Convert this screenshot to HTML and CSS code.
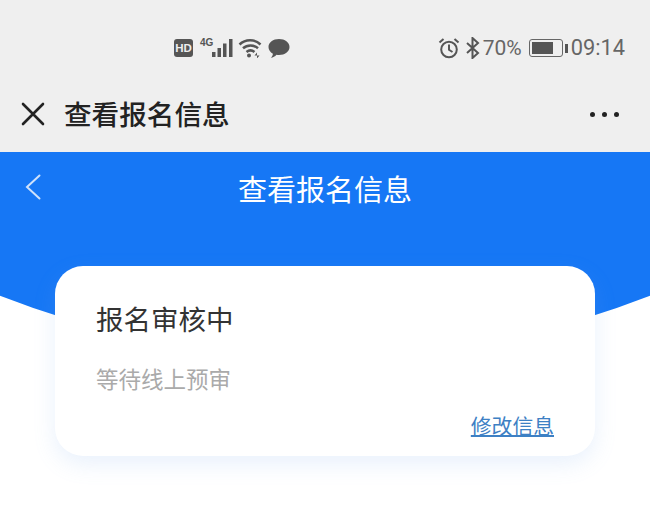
FILE: index.html
```html
<!DOCTYPE html>
<html lang="zh-CN">
<head>
<meta charset="utf-8">
<title>查看报名信息</title>
<link rel="stylesheet" href="styles.css">
</head>
<body>
<div class="status">
  <div class="status-left">
    <span class="hd">HD</span>
    <span class="net"><span class="net-label">4G</span>
      <svg class="signal" width="21" height="20" viewBox="0 0 21 20"><rect x="0" y="14" width="3.500" height="5" /><rect x="5.500" y="10" width="3.500" height="9"/><rect x="11" y="5.500" width="3.500" height="13.500"/><rect x="17" y="1" width="3.500" height="18"/></svg>
    </span>
    <svg class="wifi" width="25" height="20" viewBox="0 0 25 20" fill="none" stroke="#555" stroke-width="2.500"><path d="M1.500 6.500C7.500 .8 16.500 .8 22.500 6.500"/><path d="M5 10.300c4.300-3.800 10.700-3.800 15 0"/><path d="M8.500 14c2.400-2 5.600-2 8 0"/><circle cx="11" cy="17.500" r="2" fill="#555" stroke="none"/><path d="M19 14.500l-2.500 3h5l-2.500 3z" fill="#555" stroke="none"/></svg>
    <svg class="bubble" width="22" height="19" viewBox="0 0 22 19"><path d="M11 0c5.800 0 10.500 3.500 10.500 8s-4.700 8-10.500 8c-1 0-1.700-.1-2.500-.3C7 17.500 5 18.500 2.800 18.700c1.200-1 2-2.400 2.100-4C2.200 13.300.5 10.800.5 8 .5 3.500 5.200 0 11 0z" fill="#555"/></svg>
  </div>
  <div class="status-right">
    <svg class="alarm" width="22" height="22" viewBox="0 0 22 22" fill="none" stroke="#555" stroke-width="2"><circle cx="11" cy="12.500" r="7.800"/><path d="M11 7.500v5.300l3.500 2.200"/><path d="M1.500 5.500L5.500 2"/><path d="M20.500 5.500L16.500 2"/></svg>
    <svg class="bt" width="14" height="22" viewBox="0 0 14 22" fill="none" stroke="#555" stroke-width="2"><path d="M1 6l11 10-5.500 5V1L12 6 1 16"/></svg>
    <span class="pct">70%</span>
    <span class="battery"><span class="battery-fill"></span></span>
    <span class="nub"></span>
    <span class="time">09:14</span>
  </div>
</div>
<div class="titlebar">
  <svg class="close" width="24" height="24" viewBox="0 0 24 24" fill="none" stroke="#222" stroke-width="2.600" stroke-linecap="round"><path d="M2 2l20 20M22 2L2 22"/></svg>
  <h1 class="page-title">查看报名信息</h1>
  <div class="dots"><i></i><i></i><i></i></div>
</div>
<main class="hero">
  <div class="hero-head">
    <svg class="back" width="16" height="26" viewBox="0 0 16 26" fill="none" stroke="#cfe2fb" stroke-width="2" stroke-linecap="round"><path d="M14.500 1.500L2 13l12.500 11.500"/></svg>
    <h2 class="hero-title">查看报名信息</h2>
  </div>
  <section class="card">
    <h3 class="card-title">报名审核中</h3>
    <p class="card-desc">等待线上预审</p>
    <div class="card-foot"><a class="card-link" href="#">修改信息</a></div>
  </section>
</main>
</body>
</html>
```
FILE: styles.css
```css
* { box-sizing: border-box; }
html, body { margin: 0; padding: 0; }
body {
  width: 650px;
  height: 507px;
  overflow: hidden;
  background: #fff;
  font-family: "Noto Sans CJK SC", "Noto Sans", sans-serif;
}
.status {
  height: 84px;
  background: #efefef;
  display: flex;
  justify-content: space-between;
  align-items: flex-start;
  padding: 37px 25px 0 174px;
  color: #555;
}
.status-left, .status-right { display: flex; align-items: center; height: 22px; }
.hd {
  width: 19px; height: 18px;
  background: #555;
  color: #eee;
  border-radius: 3px;
  font: 700 11.500px/18px "Liberation Sans", sans-serif;
  text-align: center;
  margin-right: 7px;
}
.net { display: flex; align-items: flex-end; position: relative; width: 33px; height: 20px; margin-right: 5px; }
.net-label { font: 700 10px/10px "Liberation Sans", sans-serif; color: #555; margin-bottom: 10px; width: 12px; }
.signal { fill: #555; position: absolute; right: 0; top: 0; }
.wifi { margin-right: 5px; }
.alarm { margin-right: 6px; }
.bt { margin-right: 3px; }
.pct { font: 400 21px/22px Roboto, sans-serif; width: 40px; color: #666; margin-right: 6px; }
.battery {
  width: 34px; height: 18px;
  border: 1.500px solid #666;
  border-radius: 3px;
  padding: 2px;
  display: flex;
}
.battery-fill { width: 21px; background: #555; }
.nub { width: 3px; height: 9px; background: #555; margin: 0 3px 0 2px; }
.time { font: 400 21.800px/22px Roboto, sans-serif; color: #666; }
.titlebar {
  height: 68px;
  background: #efefef;
  display: flex;
  align-items: center;
  padding: 0 31px 8px 21px;
}
.close { margin-right: 19px; }
.page-title { margin: 0 0 2px; font-size: 27.600px; font-weight: 500; color: #222; line-height: 36px; flex: 1; }
.dots { display: flex; gap: 7px; }
.dots i { width: 5px; height: 5px; border-radius: 50%; background: #222; }
.hero {
  position: relative;
  height: 355px;
  overflow: hidden;
  padding: 0 55px;
}
.hero::before {
  content: "";
  position: absolute;
  left: -569px;
  top: -1583px;
  width: 1788px;
  height: 1788px;
  border-radius: 50%;
  background: #1677f5;
}
.hero-head {
  position: relative;
  height: 114px;
  padding-top: 13px;
  text-align: center;
}
.back { position: absolute; left: -30px; top: 22px; }
.hero-title { margin: 0; font-size: 29px; font-weight: 400; line-height: 46px; color: #fff; }
.card {
  position: relative;
  height: 190px;
  background: #fff;
  border-radius: 28px;
  box-shadow: 0 8px 22px rgba(120, 170, 235, 0.16);
  padding: 31px 41px 0;
  display: flex;
  flex-direction: column;
}
.card-title { margin: 0; font-size: 27.500px; font-weight: 400; line-height: 42px; color: #333; }
.card-desc { margin: 21px 0 0; font-size: 22.500px; line-height: 36px; color: #aaa; }
.card-foot { margin-top: 14px; text-align: right; }
.card-link { font-size: 20.800px; line-height: 30px; color: #3d80c4; text-decoration-thickness: 2px; }
```
